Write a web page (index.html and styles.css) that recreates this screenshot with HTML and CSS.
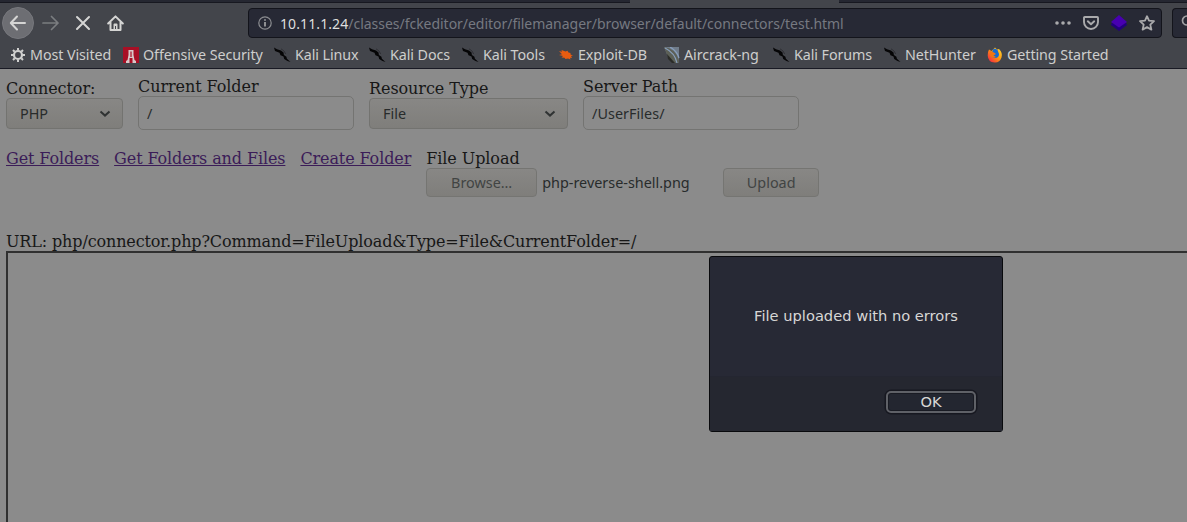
FILE: index.html
```
<!DOCTYPE html>
<html lang="en">
<head>
<meta charset="utf-8">
<title>FCKeditor - Connectors Tests</title>
<link rel="stylesheet" href="styles.css">
</head>
<body>
<svg class="defs" width="0" height="0" aria-hidden="true">
  <symbol id="dragon" viewBox="0 0 17 16"><path d="M0 .5 3 2.200 7 3.500l2.500 2 .4 2.500 2.500 1.800.5 2 3.600 3.200-3-.9-3.300-2.200-.7-2.400L6.500 8.200 5.500 5.800 1 4z" fill="#050506"/><path d="M7 1.800l3 2.200 1.700 3" fill="none" stroke="#292a2e" stroke-width=".8"/></symbol>
  <symbol id="chevron" viewBox="0 0 12 8"><path d="M1.500 1.500 6 5.600l4.500-4.100" fill="none" stroke="#303333" stroke-width="2"/></symbol>
</svg>
<header class="browser">
  <div class="tabs"><i class="tab-left"></i><i class="tab-active"></i><i class="tab-right"></i></div>
  <div class="toolbar">
    <div class="back"><svg width="18" height="16" viewBox="0 0 18 16"><path d="M8 1.500 1.800 8 8 14.500M2 8h14" fill="none" stroke="#d5d5d4" stroke-width="2" stroke-linecap="round" stroke-linejoin="round"/></svg></div>
    <svg class="forward" width="18" height="16" viewBox="0 0 18 16"><path d="M9.500 1.500 16 8l-6.500 6.500M16 8H1" fill="none" stroke="#7b7d80" stroke-width="1.700" stroke-linecap="round" stroke-linejoin="round"/></svg>
    <svg class="stop" width="16" height="16" viewBox="0 0 16 16"><path d="m2 2 12 12M14 2 2 14" stroke="#d5d5d4" stroke-width="2" stroke-linecap="round"/></svg>
    <svg class="home" width="17" height="17" viewBox="0 0 17 17"><path d="M1.200 8.500 8.500 1.400l7.300 7.100M3.500 7.500v7.600h10V7.500" fill="none" stroke="#d5d5d4" stroke-width="2" stroke-linecap="round" stroke-linejoin="round"/><path d="M6.500 15V9.500q0-1 1-1h2q1 0 1 1V15H9v-4H8v4z" fill="#d5d5d4"/></svg>
    <div class="address">
      <svg width="14" height="14" viewBox="0 0 14 14"><circle cx="7" cy="7" r="6.200" fill="none" stroke="#8c8d91" stroke-width="1.200"/><path d="M7 6v4.500M7 3.200v1.600" stroke="#a9a9ab" stroke-width="1.600"/></svg>
      <span class="url"><b>10.11.1.24</b><span>/classes/fckeditor/editor/filemanager/browser/default/connectors/test.html</span></span>
      <span class="actions">
        <svg width="16" height="16" viewBox="0 0 16 16"><g fill="#aaaaac"><circle cx="2" cy="8" r="1.800"/><circle cx="8" cy="8" r="1.800"/><circle cx="14" cy="8" r="1.800"/></g></svg>
        <svg width="16" height="16" viewBox="0 0 16 16"><path d="M1.800 2h12.400q.8 0 .8.800V7a7 7 0 0 1-14 0V2.800Q1 2 1.800 2z" fill="none" stroke="#aaaaac" stroke-width="1.900"/><path d="m4.800 6.300 3.200 3 3.200-3" fill="none" stroke="#aaaaac" stroke-width="1.900" stroke-linecap="round" stroke-linejoin="round"/></svg>
        <svg width="16" height="16" viewBox="0 0 16 16"><path d="m0 9 8-5 8 5v1l-8 6-8-6z" fill="#22007c"/><path d="m0 7 8-7 8 7-8 5.500z" fill="#4700b0"/></svg>
        <svg width="16" height="16" viewBox="0 0 16 16"><path d="m8 1.200 2 4.500 5 .5-3.700 3.400 1.100 5L8 12.100l-4.400 2.500 1.100-5L1 6.200l5-.5z" fill="none" stroke="#aaaaac" stroke-width="1.800" stroke-linejoin="round"/></svg>
      </span>
    </div>
    <div class="search"><svg width="14" height="14" viewBox="0 0 14 14"><circle cx="6" cy="5.500" r="4.500" fill="none" stroke="#a0a0a3" stroke-width="1.700"/><path d="m9 9 4 4" stroke="#a0a0a3" stroke-width="1.700"/></svg></div>
  </div>
  <nav class="bookmarks">
    <a class="most"><svg width="16" height="16" viewBox="0 0 16 16"><circle cx="8" cy="8" r="4" fill="none" stroke="#d0d0cf" stroke-width="2.200"/><path d="M8 1v2.500M8 12.500V15M1 8h2.500M12.500 8H15M3 3l1.700 1.700M11.300 11.300 13 13M13 3l-1.700 1.700M4.700 11.300 3 13" stroke="#d0d0cf" stroke-width="2"/></svg><span>Most Visited</span></a>
    <a class="offsec"><svg width="16" height="16" viewBox="0 0 16 16"><path d="M0 0h16v16H0z" fill="#a80f25"/><path d="M5.500 3h5v5l1 5 1.500 1v2H9.500v-5h-3v5H3v-2l1.500-1 1-5z" fill="#d8c8c9"/><path d="M7.400 4.500h1.200V10H7.400z" fill="#a80f25"/></svg><span>Offensive Security</span></a>
    <a class="linux"><svg width="17" height="16"><use href="#dragon"/></svg><span>Kali Linux</span></a>
    <a class="docs"><svg width="17" height="16"><use href="#dragon"/></svg><span>Kali Docs</span></a>
    <a class="tools"><svg width="17" height="16"><use href="#dragon"/></svg><span>Kali Tools</span></a>
    <a class="exploit"><svg width="16" height="16" viewBox="0 0 16 16"><path d="m1 4 3 .8L3.500 3l4 1.500 2-.7 1 1.700 2 .5 0 1.500 2.500 1-2 .5 1 2-2-.3.500 1.800-2.500-1-2.500.5-1-1.300-3-.2 1.500-1.500-4-.9 3-.8z" fill="#e85c10"/></svg><span>Exploit-DB</span></a>
    <a class="aircrack"><svg width="16" height="16" viewBox="0 0 16 16"><path d="M0 0h15v16h-4L5 12z" fill="#707c8a"/><path d="M0 0q11 1 15 13v3h-4L4 10z" fill="#5c6057"/><path d="M1 1q10 5 12 15M6 0q7 4 9 11" fill="none" stroke="#889fbe" stroke-width="1.200"/><path d="m3 7 8 9H8L4 12z" fill="#2b2c28"/></svg><span>Aircrack-ng</span></a>
    <a class="forums"><svg width="17" height="16"><use href="#dragon"/></svg><span>Kali Forums</span></a>
    <a class="nethunter"><svg width="17" height="16"><use href="#dragon"/></svg><span>NetHunter</span></a>
    <a class="started"><svg width="16" height="16" viewBox="0 0 16 16"><defs><linearGradient id="fox" x1="1" y1="0" x2="0" y2="1"><stop stop-color="#ffe13b"/><stop offset=".45" stop-color="#ff980c"/><stop offset="1" stop-color="#f1144d"/></linearGradient></defs><path d="M2 2.500 4.500 4 8 .5l2 2 2-.5q4 4 2.500 8.500Q12.500 16 7.500 15.500 1 15 .7 8.500.5 5 2 2.500z" fill="url(#fox)"/><path d="M6 2.500Q8 .8 10.500 3L12 7q0 4-4 4-3 0-3.500-3z" fill="#176bcf"/><path d="m3 4 4 1.500L9 7 6.500 8.500 9 10q-3 2-5.500-1z" fill="#f07612"/></svg><span>Getting Started</span></a>
  </nav>
</header>
<main class="page">
  <form class="controls">
    <div class="field select-field"><label>Connector:</label><div class="select"><span>PHP</span><svg width="12" height="8"><use href="#chevron"/></svg></div></div>
    <div class="field"><label>Current Folder</label><div class="input folder">/</div></div>
    <div class="field select-field"><label>Resource Type</label><div class="select"><span>File</span><svg width="12" height="8"><use href="#chevron"/></svg></div></div>
    <div class="field"><label>Server Path</label><div class="input path"><span>/UserFiles/</span></div></div>
  </form>
  <div class="commands">
    <a>Get Folders</a><a>Get Folders and Files</a><a>Create Folder</a>
    <div class="upload"><label>File Upload</label><div class="file-row"><div class="button browse"><span>Browse…</span></div><span class="filename">php-reverse-shell.png</span><div class="button send"><span>Upload</span></div></div></div>
  </div>
  <div class="request">URL: php/connector.php?Command=FileUpload&amp;Type=File&amp;CurrentFolder=/</div>
  <div class="result"></div>
</main>
<div class="dialog" role="dialog"><div class="message">File uploaded with no errors</div><div class="dialog-actions"><div class="ok">OK</div></div></div>
</body>
</html>
```
FILE: styles.css
```
* { box-sizing: border-box; }
body { margin: 0; width: 1187px; height: 522px; overflow: hidden; background: #8b8b8b; color: #171717; font-family: "DejaVu Serif", serif; font-size: 16px; display: flex; flex-direction: column; }
svg { display: block; flex: none; }
.defs { position: absolute; }
.browser { height: 69px; flex: none; background: #43454b; border-bottom: 1px solid #191a24; font-family: "Noto Sans", sans-serif; }
.tabs { display: flex; height: 3px; }
.tab-left, .tab-right { background: #252731; border-bottom: 1px solid #171820; }
.tab-left { width: 630px; }
.tab-active { width: 209px; background: #43454b; }
.tab-right { flex: 1; }
.toolbar { height: 40px; display: flex; align-items: center; padding-left: 2px; }
.back { width: 32px; height: 32px; border-radius: 50%; background: #6d6e73; border: 1px solid #77787d; display: flex; align-items: center; justify-content: center; flex: none; }
.forward { margin-left: 8px; }
.stop { margin-left: 15px; }
.home { margin-left: 16px; }
.address { width: 914px; height: 30px; flex: none; margin-left: 124px; background: #272935; border: 1px solid #13141b; border-radius: 4px; display: flex; align-items: center; padding: 0 6px 0 9px; }
.url { margin-left: 8px; width: 564px; font-size: 14px; white-space: nowrap; color: #767981; }
.url b { font-weight: 400; color: #dededd; letter-spacing: .1px; }
.url > span { letter-spacing: -.03px; }
.actions { display: flex; gap: 12px; margin-left: auto; }
.search { height: 30px; flex: 1; margin-left: 10px; border: 1px solid #13141b; border-right: 0; border-radius: 4px 0 0 4px; background: #272935; padding: 6px 0 0 8px; overflow: hidden; }
.bookmarks { height: 24px; padding-left: 10px; display: flex; align-items: center; font-size: 14.300px; letter-spacing: -.08px; color: #cececd; }
.bookmarks a { display: flex; align-items: center; flex: none; white-space: nowrap; gap: 4px; }
.bookmarks span { line-height: 20px; }
.most { width: 113px; } .offsec { width: 151px; } .linux { width: 95px; } .docs { width: 93px; } .tools { width: 96px; } .exploit { width: 106px; } .aircrack { width: 109px; } .forums { width: 111px; } .nethunter { width: 103px; }
.page { flex: 1; padding: 7px 0 0 6px; display: flex; flex-direction: column; min-height: 0; letter-spacing: -.13px; }
label { display: block; height: 20px; line-height: 22px; letter-spacing: -.07px; }
.controls { height: 72px; display: grid; grid-template-columns: 117px 216px 199px 216px; gap: 15px; align-items: start; }
.select-field { padding-top: 2px; }
.select, .input, .button, .filename { font-family: "Noto Sans", sans-serif; font-size: 14.400px; letter-spacing: 0; color: #282b2b; }
.select { height: 31px; border: 1px solid #737370; border-radius: 4px; background: linear-gradient(#888785, #7f7e7b); display: flex; align-items: center; justify-content: space-between; padding: 0 11px 0 13px; }
.input { height: 34px; border: 1px solid #747472; border-radius: 5px; background: #8b8b8b; display: flex; align-items: center; padding: 1px 8px 0; }
.path { letter-spacing: .05px; }
.commands { height: 83px; display: flex; gap: 15px; line-height: 22px; white-space: nowrap; }
.commands > a { color: #3b1c58; text-decoration: underline; letter-spacing: -.11px; }
.file-row { display: flex; align-items: center; }
.button { height: 29px; border: 1px solid #757572; border-radius: 4px; background: linear-gradient(#888785, #7f7e7b); display: flex; align-items: center; justify-content: center; color: #414443; }
.browse { width: 111px; } .filename { width: 181px; margin-left: 5px; } .send { width: 96px; }
.request { height: 20px; line-height: 22px; }
.result { flex: 1; border: 2px solid #303030; border-right: 0; border-bottom: 0; }
.dialog { position: absolute; left: 709px; top: 256px; width: 294px; height: 176px; border: 1px solid #090a0d; border-radius: 3px; background: #272935; color: #d7d7d5; font: 14.670px "DejaVu Sans", sans-serif; display: flex; flex-direction: column; }
.message { height: 119px; text-align: center; line-height: 118px; }
.dialog-actions { flex: 1; border-top: 1px solid #242631; background: #252730; padding: 14px 26px 0 0; display: flex; justify-content: flex-end; align-items: flex-start; }
.ok { width: 90px; height: 22px; border: 2px solid #5f6167; border-radius: 5px; box-shadow: 0 0 0 1.500px #171820, inset 0 0 0 1px #191b23; background: #232630; text-align: center; line-height: 18px; }
```
